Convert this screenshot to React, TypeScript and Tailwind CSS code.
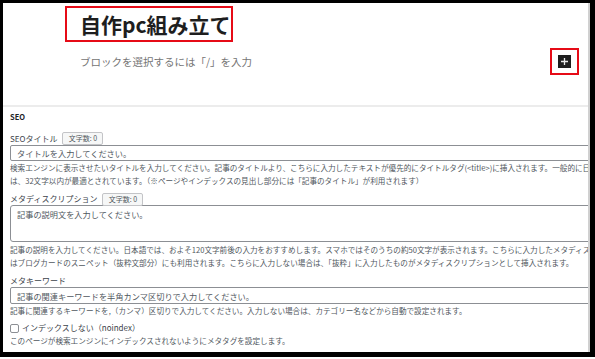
import React from "react";

const jp = { fontFamily: '"Noto Sans CJK JP", "Noto Sans", sans-serif' };

function Badge() {
  return (
    <span className="ml-[5px] inline-flex h-[13px] w-[41px] items-center justify-center rounded-[2px] border border-[#c3c4c7] bg-[#f6f7f7] text-[7px] leading-none text-[#50575e]">
      文字数: 0
    </span>
  );
}

export default function App() {
  return (
    <div className="h-[359px] w-[595px] overflow-hidden bg-white" style={jp}>
      <div className="flex h-[357px] border-b-[5px] border-l-[3px] border-r-[5px] border-t-[3px] border-black">
        {/* 本体：右端でクリップされる */}
        <div className="flex-1 overflow-hidden border-r-2 border-[#d0d0d0]">
          {/* エディタ部分 */}
          <div className="h-[99px]">
            <div className="ml-[62px] mt-[3px] flex h-[36px] w-[168px] items-center border-2 border-[#e60b17] pl-[13px]">
              <h1 className="whitespace-nowrap text-[21px] font-bold leading-none text-[#1e1e1e]">自作pc組み立て</h1>
            </div>
            <div className="mt-[6px] flex items-center justify-between pl-[77px] pr-[9px]">
              <span className="text-[10.5px] text-[#757575]">ブロックを選択するには「/」を入力</span>
              <div className="flex h-[27px] w-[29px] items-center justify-center border-2 border-[#e60b17]">
                <div className="flex h-[13px] w-[13px] items-center justify-center bg-[#1e1e1e]">
                  <svg width="9" height="9" viewBox="0 0 9 9">
                    <path d="M4.5 1v7M1 4.5h7" stroke="#e8e8e8" strokeWidth="1.3" />
                  </svg>
                </div>
              </div>
            </div>
          </div>
          <div className="h-[2px] bg-[#ececec]" />

          {/* SEO 設定 */}
          <div className="w-[640px] pl-[7px] text-[#3c434a]">
            <div className="mt-[4px] h-[12px] text-[7.5px] font-semibold leading-[12px] text-[#1d2327]">SEO</div>

            <div className="mt-[9px] flex h-[13px] items-center text-[8px]">
              <span>SEOタイトル</span>
              <Badge />
            </div>
            <input
              className="block h-[16px] w-full rounded-[2px] border border-[#8c8f94] px-[6px] text-[8.2px] text-[#2c3338] placeholder:text-[#50575e]"
              placeholder="タイトルを入力してください。"
            />
            <p className="whitespace-nowrap text-[7.6px] leading-[13px] text-[#50575e]">
              検索エンジンに表示させたいタイトルを入力してください。記事のタイトルより、こちらに入力したテキストが優先的にタイトルタグ(&lt;title&gt;)に挿入されます。一般的に日本語で
              <br />
              は、32文字以内が最適とされています。（※ページやインデックスの見出し部分には「記事のタイトル」が利用されます）
            </p>

            <div className="mt-[6px] flex h-[12px] items-center text-[8px]">
              <span>メタディスクリプション</span>
              <Badge />
            </div>
            <textarea
              className="block h-[37px] w-full resize-none rounded-[3px] border border-[#8c8f94] px-[6px] py-[2px] text-[8.2px] leading-[12px] text-[#2c3338] placeholder:text-[#50575e]"
              placeholder="記事の説明文を入力してください。"
            />
            <p className="mt-[1px] whitespace-nowrap text-[7.6px] leading-[13px] text-[#50575e]">
              記事の説明を入力してください。日本語では、およそ120文字前後の入力をおすすめします。スマホではそのうちの約50文字が表示されます。こちらに入力したメタディスクリプション
              <br />
              はブログカードのスニペット（抜粋文部分）にも利用されます。こちらに入力しない場合は、「抜粋」に入力したものがメタディスクリプションとして挿入されます。
            </p>

            <div className="mt-[6px] flex h-[12px] items-center text-[8px]">
              <span>メタキーワード</span>
            </div>
            <input
              className="block h-[17px] w-full rounded-[2px] border border-[#8c8f94] px-[6px] text-[8.2px] text-[#2c3338] placeholder:text-[#50575e]"
              placeholder="記事の関連キーワードを半角カンマ区切りで入力してください。"
            />
            <p className="whitespace-nowrap text-[7.6px] leading-[13px] text-[#50575e]">
              記事に関連するキーワードを,（カンマ）区切りで入力してください。入力しない場合は、カテゴリー名などから自動で設定されます。
            </p>

            <label className="mt-[5px] flex h-[12px] items-center text-[8px]">
              <span className="mr-[3px] inline-block h-[9px] w-[9px] rounded-[2px] border border-[#8c8f94] bg-white" />
              <span>インデックスしない（noindex）</span>
            </label>
            <p className="whitespace-nowrap text-[7.6px] leading-[13px] text-[#50575e]">
              このページが検索エンジンにインデックスされないようにメタタグを設定します。
            </p>
          </div>
        </div>
      </div>
    </div>
  );
}
